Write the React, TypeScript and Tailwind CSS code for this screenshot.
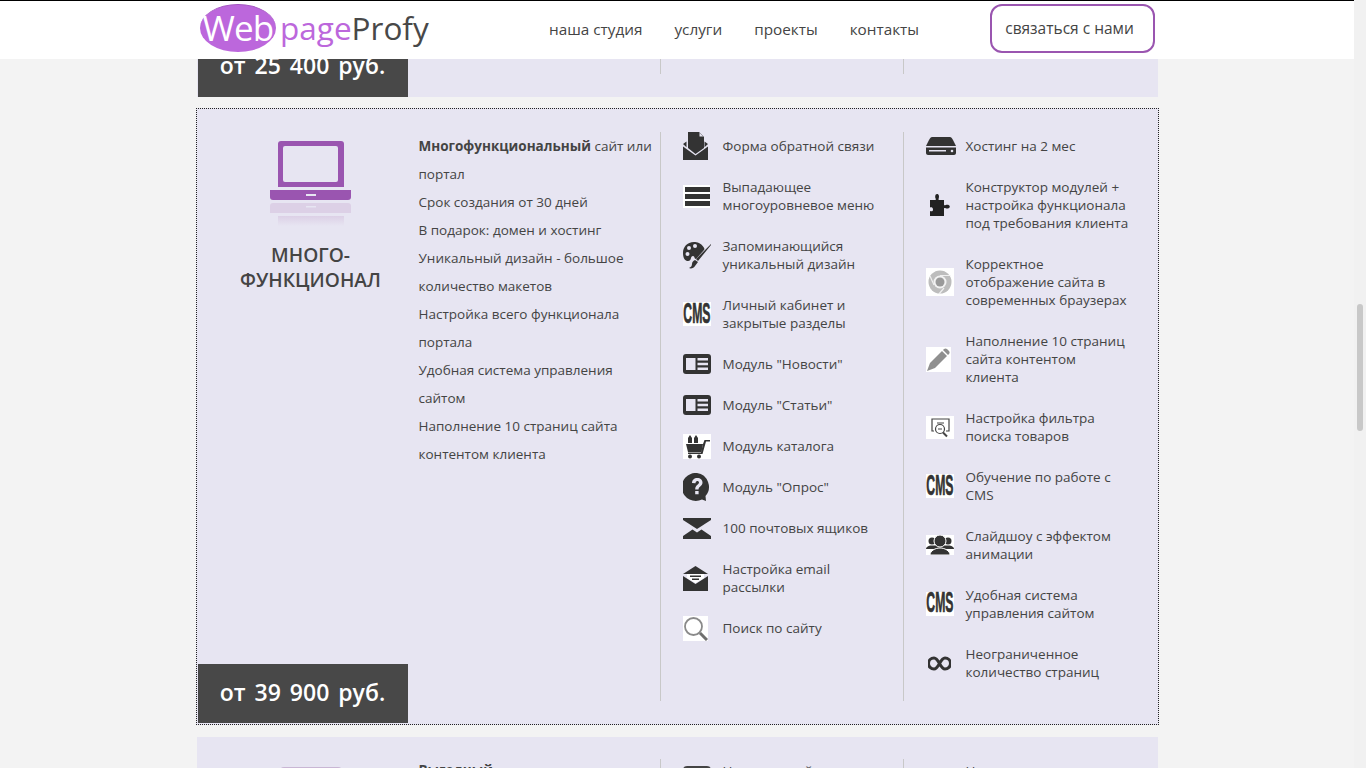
import type { ReactNode } from "react";

const font = "font-['Open_Sans','Noto_Sans',sans-serif]";
const ink = "#333333";
const card = "#e7e5f2";

const MailDoc = () => (
  <svg viewBox="0 0 25 28" className="h-7 w-[25px] shrink-0" fill={ink}>
    <path d="M5 0h11l5 5v11l-8.500 6L5 16z" />
    <path d="M16.500 0.800l3.700 3.700h-3.700z" fill={card} />
    <path d="M0 12l3.500-2.500v5.800zM25 12l-3.500-2.500v5.800zM0 14.500l12.500 9 12.500-9V28H0z" />
  </svg>
);
const Burger = () => (
  <svg viewBox="0 0 27 23" className="h-[23px] w-[27px] shrink-0 bg-white" fill={ink}>
    <path d="M2 2h25v5H2zM2 9h25v5H2zM2 16h25v5H2z" />
  </svg>
);
const Palette = () => (
  <svg viewBox="0 0 28 28" className="h-7 w-7 shrink-0" fill={ink}>
    <path d="M11 1C4 1 0 6 0 12c0 5 2 8 5 8 4 0 2-5 5-5 2 0 1 3 3 3l8-9c1-1 0-2-.5-3C18 2 14 1 11 1z" />
    <circle cx="6" cy="7" r="2" fill={card} />
    <circle cx="12" cy="5" r="2" fill={card} />
    <circle cx="4.500" cy="13" r="2" fill={card} />
    <path d="M28 3L13 18l2 2L28 4zM12 19l3 2-3 4c-1 2-4 3-6 2 2-1 3-2 3-4 0-2 1-3 3-4z" />
  </svg>
);
const Cms = () => (
  <span className="flex h-6 w-7 shrink-0 items-center justify-center bg-white">
    <span className="origin-center scale-x-[0.72] scale-y-[1.7] font-['Liberation_Sans',sans-serif] text-[17px] leading-[14px] font-bold whitespace-nowrap text-[#333] [-webkit-text-stroke:0.4px_#333]">
      CMS
    </span>
  </span>
);
const News = () => (
  <svg viewBox="0 0 28 20" className="h-5 w-7 shrink-0" fill={ink}>
    <rect width="28" height="20" rx="3" />
    <path d="M3 4h9.500v12H3z" fill={card} />
    <path d="M14.500 4H25v2.500H14.500zM14.500 8.700H25v2.500H14.500zM14.500 13.500H25V16H14.500z" fill={card} />
  </svg>
);
const Cart = () => (
  <svg viewBox="0 0 28 25" className="h-[25px] w-7 shrink-0 bg-white" fill={ink}>
    <path d="M3 10h17l-1.500 8H5z" />
    <path d="M20 10l1.500-4H27v1.500h-4L19.500 20H5v-1.500h13z" />
    <circle cx="7" cy="22.500" r="2" />
    <circle cx="16" cy="22.500" r="2" />
    <path d="M5 9V4l2-3 2 3v5zM11 9V4l2-3 2 3v5z" />
  </svg>
);
const Question = () => (
  <svg viewBox="0 0 28 28" className="h-7 w-7 shrink-0" fill={ink}>
    <path d="M14 0a14 14 0 1 0 5 26.500L23 28l-.5-5A14 14 0 0 0 14 0z" />
    <path
      d="M9 10c0-3 2.200-5 5.300-5s5.200 1.800 5.200 4.500c0 3.800-4 3.800-4 7h-3.300c0-4.700 3.800-4.700 3.800-6.900 0-1-.7-1.700-1.700-1.700-1.100 0-1.800.9-1.800 2.400zM12.200 18h3.400v3.300h-3.400z"
      fill={card}
    />
  </svg>
);
const Envelope = () => (
  <svg viewBox="0 0 28 21" className="h-[21px] w-7 shrink-0" fill={ink}>
    <path d="M0 0h28v2L14 11 0 2z" />
    <path d="M0 21v-3l9.500-6.500 4.500 3 4.500-3L28 18v3z" />
  </svg>
);
const OpenMail = () => (
  <svg viewBox="0 0 25 25" className="h-[25px] w-[25px] shrink-0" fill={ink}>
    <path d="M12.500 0L25 8H0z" />
    <path d="M0 10l12.500 8L25 10v15H0z" />
    <path d="M4 8h17v4l-8.500 5L4 12z" fill="#fff" />
    <path d="M7 9.500h11V11H7zM9 12.500h7V14H9z" />
  </svg>
);
const Search = () => (
  <svg viewBox="0 0 25 25" className="h-[25px] w-[25px] shrink-0 bg-white">
    <circle cx="10.500" cy="10.500" r="8.500" fill="none" stroke="#8a8a8a" strokeWidth="1.800" />
    <path d="M17 17l7 7" stroke="#6f6f6f" strokeWidth="3" />
  </svg>
);
const Hosting = () => (
  <svg viewBox="0 0 30 18" className="h-[18px] w-[30px] shrink-0" fill={ink}>
    <path d="M6 0h18c1 0 2 1 3 3l3 6H0l3-6c1-2 2-3 3-3z" />
    <path d="M0 10.500h30V16c0 1-1 2-2 2H2c-1 0-2-1-2-2z" />
    <path d="M3 13h17v1.500H3z" fill={card} />
    <circle cx="26" cy="14" r="1.300" fill={card} />
  </svg>
);
const Puzzle = () => (
  <span className="flex w-7 justify-center">
    <svg viewBox="0 0 22 22" className="h-[22px] w-[22px] shrink-0" fill="#222">
      <path d="M1 6h5c1 0 1-.8.5-1.800S6 0 8 0s2.300 2.500 1.800 4-.5 2 .7 2h4.500v4.500c0 1 .8 1 1.800.5s4-.5 4 1.500-2.500 2.300-4 1.800-1.800-.5-1.800.7V22H1v-5c1 .5 3 .8 3-1.500S2 13 1 13.500z" />
    </svg>
  </span>
);
const Chrome = () => (
  <svg viewBox="0 0 28 28" className="h-7 w-7 shrink-0 bg-white">
    <circle cx="14" cy="14" r="11.500" fill="#bdbdbd" />
    <circle cx="14" cy="14" r="6.500" fill="#f2f2f2" />
    <circle cx="14" cy="14" r="4.500" fill="#9a9a9a" />
    <path d="M14 7.500h10.500M8 17L4 8M18 20l-5 6" stroke="#efefef" strokeWidth="1.200" fill="none" />
  </svg>
);
const Pencil = () => (
  <svg viewBox="0 0 25 25" className="h-[25px] w-[25px] shrink-0 bg-white" fill="#8f8f8f">
    <path d="M1 24l3-8L16 4l5 5L9 21z" />
    <path d="M17 3l1-1c1-.8 2-.8 3 0l2 2c.8 1 .8 2 0 3l-1 1z" />
  </svg>
);
const Filter = () => (
  <svg viewBox="0 0 28 23" className="h-[23px] w-7 shrink-0 bg-white" fill="none" stroke="#444" strokeWidth="1.200">
    <path d="M8 15H6V3h17v12h-3" />
    <circle cx="14" cy="13" r="4.500" />
    <path d="M17 16.500l4 4" strokeWidth="2" />
    <path d="M11 7h7M12 13h4" />
  </svg>
);
const People = () => (
  <svg viewBox="0 0 28 20" className="h-5 w-7 shrink-0 bg-white" fill={ink}>
    <circle cx="6" cy="6" r="3.500" />
    <circle cx="22" cy="6" r="3.500" />
    <path d="M0 14c0-2 3-3.500 5-3.500h18c2 0 5 1.500 5 3.500z" />
    <circle cx="14" cy="6" r="6" stroke="#fff" />
    <path d="M4 20c0-4 5-7 10-7s10 3 10 7z" stroke="#fff" />
  </svg>
);
const Loop = () => (
  <span className="flex w-7 justify-center">
    <svg viewBox="0 0 23 15" className="h-[15px] w-[23px] shrink-0">
      <path
        d="M6 2a5.500 5.500 0 1 0 0 11c5 0 6-11 11-11a5.500 5.500 0 1 1 0 11C12 13 11 2 6 2z"
        fill="none"
        stroke={ink}
        strokeWidth="3"
      />
    </svg>
  </span>
);

const Laptop = () => (
  <svg viewBox="0 0 82 86" className="mt-[31px] ml-[16px] h-[86px] w-[82px] shrink-0">
    <defs>
      <linearGradient id="fade" x1="0" y1="0" x2="0" y2="1">
        <stop offset="0" stopColor="#dcd0e6" />
        <stop offset="1" stopColor="#e7e5f2" />
      </linearGradient>
    </defs>
    <path
      fillRule="evenodd"
      d="M8 3a3 3 0 0 1 3-3h60a3 3 0 0 1 3 3v43H8zM13 7v32a2 2 0 0 0 2 2h51a2 2 0 0 0 2-2V7a2 2 0 0 0-2-2H15a2 2 0 0 0-2 2z"
      fill="#9a55b0"
    />
    <path d="M0 49h81v7a3 3 0 0 1-3 3H3a3 3 0 0 1-3-3z" fill="#9a55b0" />
    <path d="M36 53h10v2H36z" fill={card} />
    <path d="M0 65a3 3 0 0 1 3-3h75a3 3 0 0 1 3 3v7H0z" fill="#dcd0e6" />
    <path d="M36 65h10v1.500H36z" fill={card} />
    <path d="M8 75h66v10H8z" fill="url(#fade)" />
  </svg>
);

const col1: [ReactNode, string[]][] = [
  [<MailDoc />, ["Форма обратной связи"]],
  [<Burger />, ["Выпадающее", "многоуровневое меню"]],
  [<Palette />, ["Запоминающийся", "уникальный дизайн"]],
  [<Cms />, ["Личный кабинет и", "закрытые разделы"]],
  [<News />, ['Модуль "Новости"']],
  [<News />, ['Модуль "Статьи"']],
  [<Cart />, ["Модуль каталога"]],
  [<Question />, ['Модуль "Опрос"']],
  [<Envelope />, ["100 почтовых ящиков"]],
  [<OpenMail />, ["Настройка email", "рассылки"]],
  [<Search />, ["Поиск по сайту"]],
];

const col2: [ReactNode, string[]][] = [
  [<Hosting />, ["Хостинг на 2 мес"]],
  [<Puzzle />, ["Конструктор модулей +", "настройка функционала", "под требования клиента"]],
  [<Chrome />, ["Корректное", "отображение сайта в", "современных браузерах"]],
  [<Pencil />, ["Наполнение 10 страниц", "сайта контентом", "клиента"]],
  [<Filter />, ["Настройка фильтра", "поиска товаров"]],
  [<Cms />, ["Обучение по работе с", "CMS"]],
  [<People />, ["Слайдшоу с эффектом", "анимации"]],
  [<Cms />, ["Удобная система", "управления сайтом"]],
  [<Loop />, ["Неограниченное", "количество страниц"]],
];

const intro = [
  "Срок создания от 30 дней",
  "В подарок: домен и хостинг",
  "Уникальный дизайн - большое",
  "количество макетов",
  "Настройка всего функционала",
  "портала",
  "Удобная система управления",
  "сайтом",
  "Наполнение 10 страниц сайта",
  "контентом клиента",
];

function Feature({ icon, lines }: { icon: ReactNode; lines: string[] }) {
  return (
    <li className="flex items-center gap-3">
      {/* the icon is taller than a text line but must not push the rows apart */}
      <span className="flex h-[18px] w-7 shrink-0 items-center justify-start">{icon}</span>
      <span className="text-[13.5px] leading-[18px] whitespace-nowrap">
        {lines.map((line) => (
          <span key={line} className="block">
            {line}
          </span>
        ))}
      </span>
    </li>
  );
}

export default function App() {
  return (
    <div className={`flex h-[768px] overflow-hidden bg-[#f3f3f3] text-[#444] ${font}`}>
      <div className="flex w-[1354px] shrink-0 flex-col items-center">
        <header className="flex h-[59px] w-full shrink-0 justify-center border-t border-black bg-white">
          <div className="flex w-[962px] items-center pr-[3px]">
            <div className="flex w-[353px] items-center self-start pt-[3px] pl-[4px]">
              <div className="flex h-[48px] w-[76px] items-center justify-center rounded-[50%] border-t border-[#a458c2] bg-[#bc67dc] text-[35px] tracking-tight text-white">
                Web
              </div>
              <span className="ml-[4px] text-[31.5px] leading-[48px] text-[#bc67dc]">page</span>
              <span className="text-[31.5px] leading-[48px] text-[#484848]">Profy</span>
            </div>
            <nav className="flex gap-8 pb-px text-[15.3px]">
              <a>наша студия</a>
              <a>услуги</a>
              <a>проекты</a>
              <a>контакты</a>
            </nav>
            <a className="mt-[3px] ml-auto flex h-[49px] w-[165px] items-center justify-center self-start rounded-xl border-2 border-[#9a55b0] bg-white pr-[6px] text-[15.5px]">
              связаться с нами
            </a>
          </div>
        </header>

        <section className="flex h-[38px] w-[961px] shrink-0 items-stretch overflow-hidden bg-[#e7e5f2] pl-px">
          <div className="flex h-[38px] w-[210px] shrink-0 items-end bg-[#484848]">
            <div className="flex h-[59px] w-full shrink-0 translate-y-[-2px] items-center justify-center text-[23px] font-semibold text-white [word-spacing:3px]">
              от 25 400 руб.
            </div>
          </div>
          <div className="ml-[252px] h-[15px] w-px bg-[#c8c8c8]" />
          <div className="ml-[242px] h-[15px] w-px bg-[#c8c8c8]" />
        </section>

        <section className="mt-[11px] flex h-[617px] w-[963px] shrink-0 border border-dotted border-[#222] bg-[#e7e5f2] p-px">
          <div className="flex w-[210px] shrink-0 flex-col items-center">
            <Laptop />
            <h3 className="mt-[15px] ml-[16px] text-center text-[19.2px] leading-[25px] font-semibold">
              МНОГО-
              <br />
              ФУНКЦИОНАЛ
            </h3>
            <div className="mt-auto flex h-[59px] w-[210px] shrink-0 items-center justify-center bg-[#484848] pb-[3px] text-[23px] font-semibold text-white [word-spacing:3px]">
              от 39 900 руб.
            </div>
          </div>
          <div className="w-[252px] shrink-0 pt-[22px] pl-[11px] text-[13.5px] leading-7 whitespace-nowrap">
            <p>
              <b>Многофункциональный</b> сайт или
            </p>
            <p>портал</p>
            {intro.map((line) => (
              <p key={line}>{line}</p>
            ))}
          </div>
          <ul className="my-[22px] flex w-[243px] shrink-0 flex-col gap-[23px] border-l border-[#c8c8c8] pt-[5px] pl-[22px]">
            {col1.map(([icon, lines]) => (
              <Feature key={lines[0]} icon={icon} lines={lines} />
            ))}
          </ul>
          <ul className="my-[22px] flex flex-1 flex-col gap-[23px] border-l border-[#c8c8c8] pt-[5px] pl-[22px]">
            {col2.map(([icon, lines]) => (
              <Feature key={lines[0]} icon={icon} lines={lines} />
            ))}
          </ul>
        </section>

        <section className="mt-[12px] flex h-[60px] w-[961px] shrink-0 bg-[#e7e5f2] pl-px">
          <div className="w-[210px] shrink-0 pt-[30px] pl-[82px]">
            <div className="h-[4px] w-[62px] rounded-t bg-[#c9b6d4]" />
          </div>
          <div className="w-[252px] shrink-0 pt-[23px] pl-[11px] text-[13.5px] font-bold">Выгодный</div>
          <div className="mt-[22px] flex w-[243px] shrink-0 gap-3 border-l border-[#c8c8c8] pl-[22px] text-[13.5px]">
            <span className="mt-[7px] block h-[10px] w-7 shrink-0 rounded-t bg-[#444]" />
            <span className="pt-[2px]">Настроенный</span>
          </div>
          <div className="mt-[22px] flex-1 border-l border-[#c8c8c8] pt-[2px] pl-[62px] text-[13.5px]">Н</div>
        </section>
      </div>
      <aside className="flex flex-1 justify-center bg-[#f1f1f1] pt-[304px]">
        <div className="h-[127px] w-[6px] rounded-full bg-[#c8c8c8]" />
      </aside>
    </div>
  );
}
